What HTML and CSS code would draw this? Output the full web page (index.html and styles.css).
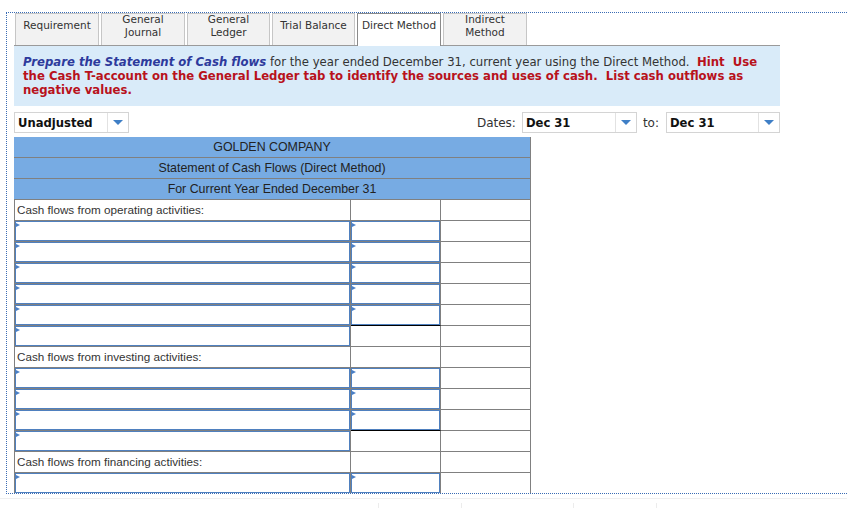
FILE: index.html
```html
<!DOCTYPE html>
<html>
<head>
<meta charset="utf-8">
<link rel="stylesheet" href="styles.css">
</head>
<body>
<div class="frame">
  <div class="tabs">
    <div class="tab w84">Requirement</div>
    <div class="tab w84">General<br>Journal</div>
    <div class="tab w83">General<br>Ledger</div>
    <div class="tab w83">Trial Balance</div>
    <div class="tab w84 active">Direct Method</div>
    <div class="tab w84">Indirect<br>Method</div>
  </div>
  <div class="instructions"><span class="lead">Prepare the Statement of Cash flows</span> for the year ended December 31, current year using the Direct Method.&nbsp; <span class="hint">Hint&nbsp; Use the Cash T-account on the General Ledger tab to identify the sources and uses of cash.&nbsp; List cash outflows as negative values.</span></div>
  <div class="toolbar">
    <div class="dd dd-unadj"><span class="dd-text">Unadjusted</span><span class="dd-btn"><span class="arrow"></span></span></div>
    <div class="dates">
      <span class="lbl">Dates:</span>
      <div class="dd dd-date"><span class="dd-text">Dec 31</span><span class="dd-btn"><span class="arrow"></span></span></div>
      <span class="lbl to">to:</span>
      <div class="dd dd-date2"><span class="dd-text">Dec 31</span><span class="dd-btn"><span class="arrow"></span></span></div>
    </div>
  </div>
  <div class="sheet">
    <div class="hd">GOLDEN COMPANY</div>
    <div class="hd">Statement of Cash Flows (Direct Method)</div>
    <div class="hd">For Current Year Ended December 31</div>

    <div class="c label">Cash flows from operating activities:</div><div class="c"></div><div class="c"></div>
    <div class="c"><div class="inp"></div></div><div class="c"><div class="inp"></div></div><div class="c"></div>
    <div class="c"><div class="inp"></div></div><div class="c"><div class="inp"></div></div><div class="c"></div>
    <div class="c"><div class="inp"></div></div><div class="c"><div class="inp"></div></div><div class="c"></div>
    <div class="c"><div class="inp"></div></div><div class="c"><div class="inp"></div></div><div class="c"></div>
    <div class="c"><div class="inp"></div></div><div class="c under"><div class="inp"></div></div><div class="c"></div>
    <div class="c"><div class="inp"></div></div><div class="c"></div><div class="c"></div>

    <div class="c label">Cash flows from investing activities:</div><div class="c"></div><div class="c"></div>
    <div class="c"><div class="inp"></div></div><div class="c"><div class="inp"></div></div><div class="c"></div>
    <div class="c"><div class="inp"></div></div><div class="c"><div class="inp"></div></div><div class="c"></div>
    <div class="c"><div class="inp"></div></div><div class="c under"><div class="inp"></div></div><div class="c"></div>
    <div class="c"><div class="inp"></div></div><div class="c"></div><div class="c"></div>

    <div class="c label">Cash flows from financing activities:</div><div class="c"></div><div class="c"></div>
    <div class="c last"><div class="inp"></div></div><div class="c last"><div class="inp"></div></div><div class="c last"></div>
  </div>
</div>
<div class="below">
  <div class="bcell b1"></div>
  <div class="bcell b2"></div>
  <div class="bcell b3"></div>
  <div class="bcell b4"></div>
</div>
</body>
</html>
```

FILE: styles.css
```css
* { box-sizing: border-box; }
html, body { margin: 0; padding: 0; background: #fff; }
body { width: 847px; height: 508px; overflow: hidden; font-family: "DejaVu Sans", Verdana, sans-serif; color: #333; }

.frame {
  margin: 12px 0 0 6px;
  border-top: 1px dotted #3a6cb4;
  border-left: 1px dotted #3a6cb4;
  border-bottom: 1px dotted #3a6cb4;
  padding-left: 7px;
}

.tabs {
  display: flex;
  gap: 2px;
  width: 766px;
  height: 33px;
  padding-left: 1px;
  border-bottom: 1px solid #9a9a9a;
}
.tab {
  height: 32px;
  background: #f2f2f2;
  border: 1px solid #c6c6c6;
  border-bottom: none;
  font-size: 10.5px;
  line-height: 13px;
  text-align: center;
  display: flex;
  align-items: center;
  justify-content: center;
  padding-bottom: 8px;
  color: #333;
}
.w84 { width: 84px; }
.w83 { width: 83px; }
.tab.active {
  background: #fff;
  border-color: #8a8a8a;
  height: 33px;
  padding-bottom: 9px;
}

.instructions {
  width: 766px;
  height: 60px;
  background: #d9ebf9;
  padding: 9px 14px 0 9px;
  font-size: 11.7px;
  line-height: 14px;
  color: #333;
}
.lead { color: #2d3a9c; font-weight: bold; font-style: italic; }
.hint { color: #b8121c; font-weight: bold; }

.toolbar {
  width: 766px;
  margin-top: 6px;
  display: flex;
  justify-content: space-between;
  align-items: center;
}
.dd {
  height: 21px;
  border: 1px solid #d4d4d4;
  display: flex;
  align-items: center;
  background: #fff;
}
.dd-text {
  flex: 1;
  font-weight: bold;
  font-size: 11.6px;
  color: #111;
  padding-left: 3px;
}
.dd-btn {
  width: 21px;
  height: 100%;
  border-left: 1px solid #e2e2e2;
  display: flex;
  align-items: center;
  justify-content: center;
}
.arrow {
  width: 0; height: 0;
  border-left: 5px solid transparent;
  border-right: 5px solid transparent;
  border-top: 5px solid #3f7fc6;
}
.dd-unadj { width: 115px; }
.dd-date { width: 115px; margin-left: 6px; }
.dd-date2 { width: 114px; margin-left: 7px; }
.dates { display: flex; align-items: center; }
.lbl { font-size: 12px; color: #333; }
.to { margin-left: 6px; }

.sheet {
  margin-top: 4px;
  display: grid;
  grid-template-columns: 336px 90px 90px;
  width: 517px;
  border-left: 1px solid #808080;
  font-family: "Liberation Sans", Arial, sans-serif;
  font-size: 12px;
  color: #333;
}
.hd {
  grid-column: 1 / 4;
  height: 21px;
  background: #77abe3;
  border-right: 1px solid #808080;
  border-bottom: 1px solid #808080;
  text-align: center;
  line-height: 20px;
  margin-left: -1px;
  width: 517px;
  font-size: 12.4px;
  color: #222;
}
.c {
  height: 21px;
  border-right: 1px solid #808080;
  border-bottom: 1px solid #808080;
}
.c.last { height: 20px; border-bottom: none; }
.c.under { border-bottom-color: #000; }
.label { padding-left: 2px; line-height: 20px; white-space: nowrap; font-size: 11.7px; }
.inp {
  height: 100%;
  border: 1px solid #4f80bf;
}
.inp::before {
  content: "";
  display: block;
  width: 0; height: 0;
  margin-top: 1px;
  border-left: 4px solid #4a7fc6;
  border-top: 2.5px solid transparent;
  border-bottom: 2.5px solid transparent;
}

.below {
  margin-top: 4px;
  height: 10px;
  border-top: 1px solid #efefef;
  display: flex;
  padding-left: 378px;
  padding-top: 4px;
}
.bcell { height: 6px; border-left: 1px solid #ececec; }
.b1 { width: 83px; }
.b2 { width: 112px; }
.b3 { width: 83px; }
.b4 { width: 10px; }
```
